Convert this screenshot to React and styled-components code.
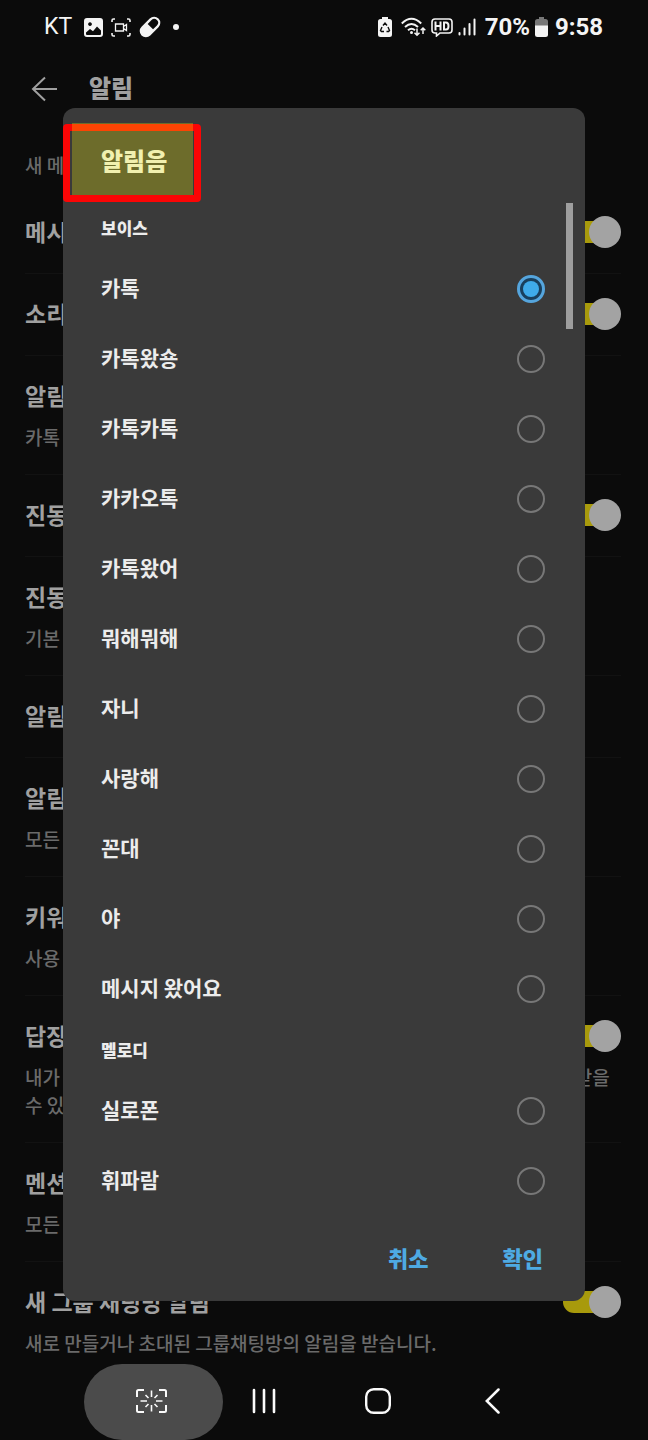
import React, { useState } from "react";
import styled, { createGlobalStyle } from "styled-components";

const GlobalStyle = createGlobalStyle`
  *, *::before, *::after { box-sizing: border-box; }
  body {
    margin: 0;
    background: #0b0b0b;
    font-family: "Noto Sans CJK KR", "Noto Sans", sans-serif;
  }
  h1, h2, h3, p { margin: 0; }
  button { border: 0; padding: 0; background: none; color: inherit; font: inherit; cursor: pointer; }
  svg { display: block; flex: none; }
`;

const Screen = styled.div`
  position: relative;
  display: flex;
  flex-direction: column;
  min-height: 100vh;
  overflow: hidden;
  color: #a0a0a0;
`;

const StatusBar = styled.header`
  display: flex;
  justify-content: space-between;
  align-items: center;
  height: 54px;
  padding: 0 45px 0 44px;
  color: #f4f4f4;
  font-family: Roboto, sans-serif;
`;

const StatusGroup = styled.div`
  display: flex;
  align-items: center;
  gap: ${(p) => p.$gap}px;
`;

const IconSlot = styled.span`
  padding-left: 4px;
`;

const Carrier = styled.span`
  margin-right: 4px;
  font-size: 23px;
  line-height: 28px;
`;

const StatusText = styled.span`
  padding-left: ${(p) => p.$space}px;
  font-size: 24px;
  font-weight: 700;
  line-height: 28px;
`;

const AppBar = styled.div`
  display: flex;
  align-items: center;
  gap: 31px;
  height: 70px;
  padding: 0 31px;
`;

const PageTitle = styled.h1`
  padding-bottom: 4px;
  font-size: 24px;
  font-weight: 900;
  line-height: 36px;
`;

const SectionLabel = styled.h2`
  padding: 27px 25px 12px;
  color: #6a6a6a;
  font-size: 19px;
  font-weight: 500;
  line-height: 28px;
`;

const Settings = styled.div`
  padding: 0 27px 0 25px;
`;

const Setting = styled.div`
  display: grid;
  grid-template-columns: 1fr auto;
  align-items: center;
  row-gap: 10px;
  padding: 24px 0 ${(p) => (p.$last ? 0 : p.$note ? 23 : 24)}px;
  border-bottom: ${(p) => (p.$last ? 0 : 1)}px solid #121212;
  margin-bottom: ${(p) => (p.$last ? 0 : -1)}px;
`;

const SettingTitle = styled.label`
  grid-column: 1;
  padding-bottom: 2px;
  font-size: 23px;
  font-weight: 700;
  line-height: 32px;
`;

const SettingNote = styled.p`
  grid-column: 1 / -1;
  color: #6a6a6a;
  font-size: 19px;
  font-weight: 500;
  line-height: 28px;
`;

const ToggleSlot = styled.span`
  display: flex;
  align-items: center;
  height: 34px;
`;

const Toggle = styled.input`
  appearance: none;
  display: grid;
  align-items: center;
  width: 58px;
  height: 32px;
  margin: 0;

  &::before, &::after { content: ""; grid-area: 1 / 1; }
  &::before {
    width: 48px;
    height: 22px;
    border-radius: 11px;
    background: #a89a0c;
  }
  &::after {
    justify-self: end;
    width: 32px;
    height: 32px;
    border-radius: 50%;
    background: #a3a3a3;
  }
`;

const NavBar = styled.nav`
  display: flex;
  align-items: center;
  height: 76px;
  margin-top: auto;
  padding-left: 84px;
  gap: 74px;
  color: #fafafa;
`;

const CapturePill = styled.button`
  display: flex;
  align-items: center;
  justify-content: center;
  width: 139px;
  height: 76px;
  margin-right: -53px;
  padding: 0 4px 2px 0;
  border-radius: 38px;
  background: #4b4b4b;
`;

const NavButton = styled.button`
  display: flex;
  align-items: center;
  justify-content: center;
  width: 40px;
  height: 48px;
  padding-bottom: 2px;
`;

const Overlay = styled.div`
  position: absolute;
  inset: 0;
  padding: 108px 63px 0;
`;

const Dialog = styled.form`
  position: relative;
  border-radius: 12px;
  background: #3a3a3a;
  color: #ececec;
  overflow: hidden;
`;

const DialogTitle = styled.h2`
  padding: 34px 38px 24px;
  font-size: 24px;
  font-weight: 900;
  line-height: 36px;
`;

const RedFrame = styled.div`
  position: absolute;
  top: 16px;
  left: 0;
  width: 138px;
  height: 78px;
  border: 7px solid #fb0505;
  border-radius: 4px;
  pointer-events: none;
`;

const Highlight = styled.div`
  position: absolute;
  top: 15px;
  left: 9px;
  width: 121px;
  height: 72px;
  background: rgba(255, 250, 0, 0.26);
  pointer-events: none;
`;

const SoundList = styled.div`
  position: relative;
`;

const ScrollThumb = styled.div`
  position: absolute;
  top: 1px;
  right: 12px;
  width: 7px;
  height: 126px;
  background: #9e9e9e;
`;

const GroupTitle = styled.h3`
  padding: 0 38px;
  font-size: 17px;
  font-weight: 900;
  line-height: 52px;
`;

const SoundRow = styled.label`
  display: flex;
  align-items: center;
  justify-content: space-between;
  height: 70px;
  padding: 0 40px 0 38px;
`;

const SoundName = styled.span`
  padding-bottom: 4px;
  font-size: 21px;
  font-weight: 700;
  line-height: 32px;
`;

const Radio = styled.input`
  appearance: none;
  display: grid;
  place-items: center;
  width: 28px;
  height: 28px;
  margin: 0;
  border: 2px solid #777777;
  border-radius: 50%;

  &:checked {
    border: 3px solid #55a5dd;
    background: #193f5c;
  }
  &:checked::before {
    content: "";
    width: 16px;
    height: 16px;
    border-radius: 50%;
    background: #3fabea;
  }
`;

const DialogActions = styled.div`
  display: flex;
  justify-content: flex-end;
  align-items: center;
  gap: 74px;
  height: 85px;
  padding: 0 42px 4px;
`;

const ActionButton = styled.button`
  color: #4eaae3;
  font-size: 22px;
  font-weight: 900;
  line-height: 34px;
`;

const ImageIcon = () => (
  <svg width="19" height="19" viewBox="0 0 19 19">
    <path fill="currentColor" fillRule="evenodd" d="M3 0h13a3 3 0 0 1 3 3v13a3 3 0 0 1-3 3H3a3 3 0 0 1-3-3V3a3 3 0 0 1 3-3ZM2 14.500 6 11l3 2.300 4-4.800 4 4V16q0 1-1 1H3q-1 0-1-1ZM6 4.200a1.900 1.900 0 1 0 .01 0Z" />
  </svg>
);

const RecordIcon = () => (
  <svg width="20" height="19" viewBox="0 0 20 19" fill="none" stroke="currentColor">
    <path strokeWidth="1.600" d="M1 4V2.500Q1 1 2.500 1H4M16 1h1.500Q19 1 19 2.500V4M19 15v1.500q0 1.500-1.500 1.500H16M4 18H2.500Q1 18 1 16.500V15" />
    <path strokeWidth="1.300" d="M4.500 6h8v7h-8ZM12.500 8.500l3-2v6l-3-2" />
  </svg>
);

const PillIcon = () => (
  <svg width="22" height="22" viewBox="0 0 22 22">
    <g transform="rotate(-45 11 11)">
      <rect x="-1" y="4.800" width="24" height="12.400" rx="6.200" fill="currentColor" />
      <path fill="#0b0b0b" d="M11.500 7.200h5.500a3.800 3.800 0 0 1 0 7.600h-5.500Z" />
    </g>
  </svg>
);

const DotIcon = () => (
  <svg width="6" height="6" viewBox="0 0 6 6"><circle cx="3" cy="3" r="3" fill="currentColor" /></svg>
);

const EcoBatteryIcon = () => (
  <svg width="14" height="20" viewBox="0 0 14 20">
    <path fill="currentColor" d="M4 0h6v2h1.500Q14 2 14 4.500v13q0 2.500-2.500 2.500h-9Q0 20 0 17.500v-13Q0 2 2.500 2H4Z" />
    <path fill="none" stroke="#0b0b0b" strokeWidth="1.400" d="M5 8.500 7 6l2 2.500M10 10l1.500 3.500-1 1H8.500M6 14.500H3.500l-1-1L4 10" />
  </svg>
);

const WifiIcon = () => (
  <svg width="25" height="20" viewBox="0 0 25 20" fill="none" stroke="currentColor" strokeWidth="2">
    <path d="M.8 6.500Q10.500-3 20.200 6.500M4 10q6.500-6 13 0M7 13.200q3.500-3 7 0" />
    <circle cx="10.500" cy="15.500" r="1.500" fill="currentColor" stroke="none" />
    <path strokeWidth="1.500" d="M16 11.500V18M13.500 15.800 16 18.300l2.500-2.500M22 17v-6M19.700 13.300 22 11l2.300 2.300" />
  </svg>
);

const HdIcon = () => (
  <svg width="22" height="19" viewBox="0 0 22 19" fill="none" stroke="currentColor">
    <path strokeWidth="1.600" d="M4 1h14q3 0 3 3v8q0 3-3 3H9l-3.500 3v-3H4q-3 0-3-3V4q0-3 3-3Z" />
    <path strokeWidth="2" d="M4.500 3.500v9M9.500 3.500v9M4.500 8h5M13 4.500v7h2q2.500 0 2.500-3.500T15 4.500Z" />
  </svg>
);

const SignalIcon = () => (
  <svg width="18" height="18" viewBox="0 0 18 18" stroke="currentColor" strokeWidth="2" strokeLinecap="round">
    <path d="M1.500 15v1.500M6.500 10.500v6M11.500 6v10.500M16.500 1.500v15" />
  </svg>
);

const BatteryIcon = () => (
  <svg width="13" height="20" viewBox="0 0 13 20">
    <path fill="#777" d="M4 0h5v2h1.500Q13 2 13 4.500V9H0V4.500Q0 2 2.500 2H4Z" />
    <path fill="currentColor" d="M0 8.500h13v9q0 2.500-2.500 2.500h-8Q0 20 0 17.500Z" />
  </svg>
);

const ArrowIcon = () => (
  <svg width="27" height="26" viewBox="0 0 27 26" fill="none" stroke="currentColor" strokeWidth="2">
    <path d="M14 1.500 2 13l12 11.500M2 13h24" />
  </svg>
);

const CaptureIcon = () => (
  <svg width="31" height="24" viewBox="0 0 31 24" fill="none" stroke="currentColor" strokeWidth="2">
    <path d="M1 8V2.500Q1 1 2.500 1H8M23 1h5.500Q30 1 30 2.500V8M30 16v5.500q0 1.500-1.500 1.500H23M8 23H2.500Q1 23 1 21.500V16" />
    <path strokeWidth="1.600" d="M15.500 1.500V8M15.500 16v6.500M4.500 12h6.500M20 12h6.500M9.500 6l3 3M21.500 6l-3 3M9.500 18l3-3M21.500 18l-3-3" />
  </svg>
);

const RecentsIcon = () => (
  <svg width="24" height="26" viewBox="0 0 24 26" stroke="currentColor" strokeWidth="2.600" strokeLinecap="round">
    <path d="M2 2v22M12 2v22M22 2v22" />
  </svg>
);

const HomeIcon = () => (
  <svg width="26" height="26" viewBox="0 0 26 26" fill="none" stroke="currentColor" strokeWidth="2.400">
    <rect x="1.200" y="1.200" width="23.600" height="23.600" rx="7.500" />
  </svg>
);

const BackIcon = () => (
  <svg width="15" height="26" viewBox="0 0 15 26" fill="none" stroke="currentColor" strokeWidth="2.500" strokeLinecap="round">
    <path d="M13.500 1.500 1.800 13l11.700 11.500" />
  </svg>
);

const settings = [
  { id: "message", title: "메시지", toggle: true },
  { id: "sound", title: "소리", toggle: true },
  { id: "tone", title: "알림음", note: "카톡" },
  { id: "vibrate", title: "진동", toggle: true },
  { id: "vibrate-type", title: "진동", note: "기본" },
  { id: "popup", title: "알림" },
  { id: "display", title: "알림", note: "모든" },
  { id: "keyword", title: "키워드", note: "사용" },
  {
    id: "reply",
    title: "답장",
    toggle: true,
    note: "내가 작성한 메시지에 답장이 달리면 채팅방 알림이 꺼져 있어도 알림을 받을 수 있음",
  },
  { id: "mention", title: "멘션", note: "모든" },
  {
    id: "group",
    title: "새 그룹 채팅방 알림",
    toggle: true,
    note: "새로 만들거나 초대된 그룹채팅방의 알림을 받습니다.",
  },
];

const soundGroups = [
  {
    name: "보이스",
    sounds: [
      "카톡", "카톡왔숑", "카톡카톡", "카카오톡", "카톡왔어", "뭐해뭐해",
      "자니", "사랑해", "꼰대", "야", "메시지 왔어요",
    ],
  },
  { name: "멜로디", sounds: ["실로폰", "휘파람"] },
];

export default function App() {
  const [sound, setSound] = useState("카톡");

  return (
    <Screen>
      <GlobalStyle />
      <StatusBar>
        <StatusGroup $gap={8}>
          <Carrier>KT</Carrier>
          <ImageIcon />
          <RecordIcon />
          <PillIcon />
          <IconSlot><DotIcon /></IconSlot>
        </StatusGroup>
        <StatusGroup $gap={5}>
          <EcoBatteryIcon />
          <IconSlot><WifiIcon /></IconSlot>
          <HdIcon />
          <SignalIcon />
          <StatusText $space={4}>70%</StatusText>
          <BatteryIcon />
          <StatusText $space={2}>9:58</StatusText>
        </StatusGroup>
      </StatusBar>

      <AppBar>
        <button type="button" aria-label="뒤로"><ArrowIcon /></button>
        <PageTitle>알림</PageTitle>
      </AppBar>

      <main>
        <SectionLabel>새 메시지</SectionLabel>
        <Settings>
          {settings.map((item, i) => (
            <Setting key={item.id} $note={!!item.note} $last={i === settings.length - 1}>
              <SettingTitle as={item.toggle ? "label" : "div"} htmlFor={item.toggle ? item.id : undefined}>
                {item.title}
              </SettingTitle>
              {item.toggle && (
                <ToggleSlot>
                  <Toggle id={item.id} type="checkbox" role="switch" defaultChecked />
                </ToggleSlot>
              )}
              {item.note && <SettingNote>{item.note}</SettingNote>}
            </Setting>
          ))}
        </Settings>
      </main>

      <NavBar>
        <CapturePill type="button" aria-label="화면 캡처"><CaptureIcon /></CapturePill>
        <NavButton type="button" aria-label="최근 앱"><RecentsIcon /></NavButton>
        <NavButton type="button" aria-label="홈"><HomeIcon /></NavButton>
        <NavButton type="button" aria-label="이전"><BackIcon /></NavButton>
      </NavBar>

      <Overlay>
        <Dialog role="dialog" aria-labelledby="sound-title" onSubmit={(e) => e.preventDefault()}>
          <DialogTitle id="sound-title">알림음</DialogTitle>
          <RedFrame />
          <Highlight />
          <SoundList>
            <ScrollThumb />
            {soundGroups.map((group) => (
              <section key={group.name}>
                <GroupTitle>{group.name}</GroupTitle>
                {group.sounds.map((name) => (
                  <SoundRow key={name}>
                    <SoundName>{name}</SoundName>
                    <Radio type="radio" name="sound" checked={sound === name} onChange={() => setSound(name)} />
                  </SoundRow>
                ))}
              </section>
            ))}
          </SoundList>
          <DialogActions>
            <ActionButton type="button">취소</ActionButton>
            <ActionButton type="submit">확인</ActionButton>
          </DialogActions>
        </Dialog>
      </Overlay>
    </Screen>
  );
}
